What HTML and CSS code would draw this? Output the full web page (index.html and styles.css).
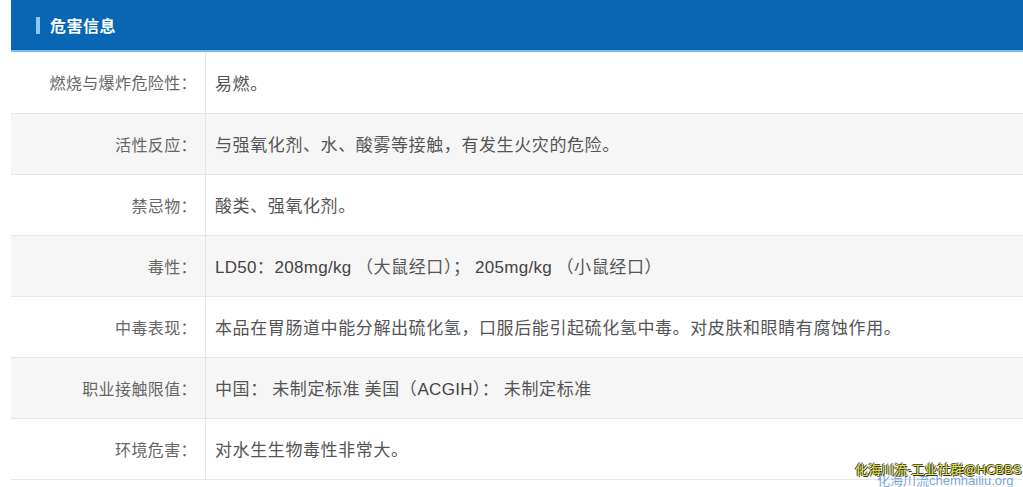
FILE: index.html
```html
<!DOCTYPE html>
<html lang="zh-CN">
<head>
  <meta charset="UTF-8" />
  <meta name="viewport" content="width=device-width, initial-scale=1.0"/>
  <title>危害信息</title>
  <link rel="stylesheet" href="styles.css">
</head>
<body>
  <div class="panel">
    <div class="panel-head"><span class="bar"></span>危害信息</div>
    <table class="info">
      <tr><th>燃烧与爆炸危险性：</th><td>易燃。</td></tr>
      <tr><th>活性反应：</th><td>与强氧化剂、水、酸雾等接触，有发生火灾的危险。</td></tr>
      <tr><th>禁忌物：</th><td>酸类、强氧化剂。</td></tr>
      <tr><th>毒性：</th><td><span class="lat">LD50</span>：<span class="lat">208mg/kg</span> （大鼠经口）； <span class="lat">205mg/kg</span> （小鼠经口）</td></tr>
      <tr><th>中毒表现：</th><td>本品在胃肠道中能分解出硫化氢，口服后能引起硫化氢中毒。对皮肤和眼睛有腐蚀作用。</td></tr>
      <tr><th>职业接触限值：</th><td>中国： 未制定标准 美国（<span class="lat">ACGIH</span>）： 未制定标准</td></tr>
      <tr><th>环境危害：</th><td>对水生生物毒性非常大。</td></tr>
    </table>
  </div>

  <div class="mark">
    <span class="mark-back">化海川流chemhailiu.org</span>
    <span class="mark-front">化海川流-工业社群@HCBBS</span>
  </div>
</body>
</html>
```

FILE: styles.css
```css
body {
  margin: 0;
  padding: 0 0 0 11px;
  background: #fff;
  font-family: "Noto Sans CJK SC", "DejaVu Sans", sans-serif;
  overflow: hidden;
}
.panel {
  width: 1030px;
}
.panel-head {
  height: 50px;
  background: #0866b5;
  border-bottom: 2px solid #79bdee;
  color: #fff;
  font-size: 16px;
  font-weight: bold;
  letter-spacing: 0.5px;
  display: flex;
  align-items: center;
  padding-left: 25px;
}
.panel-head .bar {
  display: inline-block;
  width: 4px;
  height: 17px;
  background: #8ec8f2;
  margin-right: 10px;
}
.info {
  width: 100%;
  border-collapse: collapse;
}
.info tr {
  height: 61px;
}
.info tr:nth-child(even) {
  background: #f6f6f6;
}
.info th, .info td {
  border-bottom: 1px solid #e6e6e6;
  font-weight: normal;
  padding: 0;
}
.info th {
  width: 186px;
  text-align: right;
  padding-right: 8px;
  font-size: 16px;
  color: #666;
  letter-spacing: 0.4px;
  border-right: 1px solid #e6e6e6;
}
.info td {
  padding-left: 9px;
  font-size: 17px;
  color: #555;
  letter-spacing: 0.6px;
}
.lat {
  font-family: "Liberation Sans", Arial, sans-serif;
  font-size: 17px;
  letter-spacing: 0.3px;
  color: #444;
}
.mark {
  position: absolute;
  left: 855px;
  top: 461px;
  width: 170px;
  height: 26px;
}
.mark span {
  position: absolute;
  white-space: nowrap;
  font-size: 13px;
  font-family: "Liberation Sans", "Noto Sans CJK SC", sans-serif;
}
.mark-back {
  left: 22px;
  top: 9px;
  color: #7aa8dc;
}
.mark-front {
  left: 0;
  top: -2px;
  color: #e4e83a;
  text-shadow: 1px 1px 0 #333, -1px 0 0 #333, 0 -1px 0 #555;
}
```
